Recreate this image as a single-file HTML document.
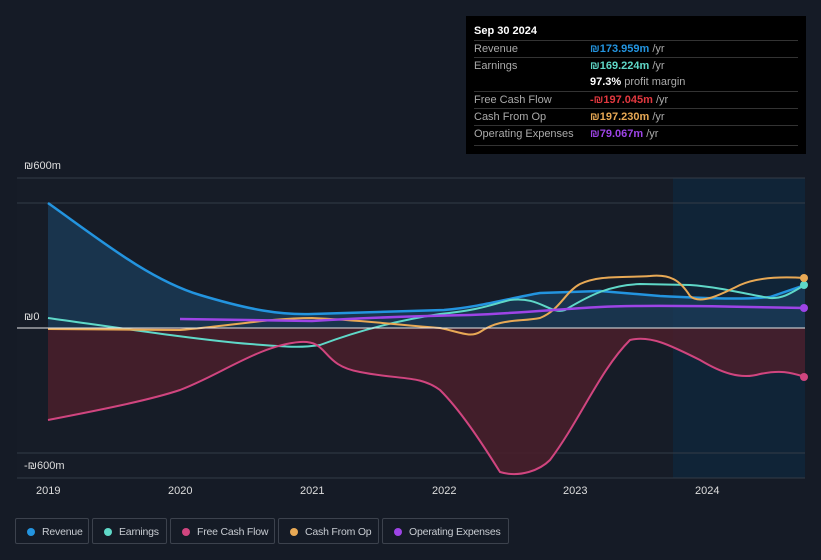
<!DOCTYPE html>
<html><head><style>
html,body{margin:0;background:#151b26;width:821px;height:560px;overflow:hidden}
body{font-family:"Liberation Sans",sans-serif;position:relative}
.tip{position:absolute;left:466px;top:16px;width:340px;height:138px;background:#000;color:#fff;font-size:11px}
.tip .h{position:absolute;left:8px;top:9px;font-weight:bold}
.row{position:absolute;left:8px;width:324px;height:17px;border-top:1px solid #333;line-height:17px}
.row .l{color:#aaa;position:absolute;left:0}
.row .v{position:absolute;left:116px;font-weight:bold}
.row .v span{color:#aaa;font-weight:normal}
.leg{position:absolute;top:518px;height:26px;border:1px solid #3c424d;border-radius:2px;color:#c8ccd2;font-size:10.5px;line-height:26px;box-sizing:border-box;white-space:nowrap}
.leg i{position:absolute;left:11px;top:9px;width:8px;height:8px;border-radius:50%}
.leg b{font-weight:normal;position:absolute;left:26px;white-space:nowrap;letter-spacing:-0.2px}
.ax{position:absolute;color:#ddd;font-size:11px}
</style></head><body>
<svg width="821" height="560" style="position:absolute;left:0;top:0">
<rect x="673" y="178" width="132" height="300" fill="#102437"/>
<rect x="17" y="178" width="656" height="300" fill="#161c27"/>
<line x1="17" y1="178" x2="805" y2="178" stroke="#333b47"/>
<line x1="17" y1="203" x2="805" y2="203" stroke="#333b47"/>
<line x1="17" y1="453" x2="805" y2="453" stroke="#333b47"/>
<line x1="17" y1="478" x2="805" y2="478" stroke="#333b47"/>
<path d="M48,203 C100,240 150,280 200,295 C250,310 280,315 312,314 L444,310 C480,307 510,298 540,293 L600,291 L660,296 C700,298 740,300 770,297 L805,285 L805,328 L48,328Z" fill="#1a3b57" opacity="0.8"/>
<path d="M48,420 C100,410 150,400 180,390 C220,375 260,345 300,342 C330,340 320,365 360,372 C400,380 420,375 440,390 C460,410 480,440 500,472 C520,478 540,470 550,460 C580,420 600,370 630,340 C650,335 670,345 700,360 C720,372 740,380 760,374 C780,370 790,372 805,377 L805,328 L48,328Z" fill="#4a1f2b" opacity="0.85"/>
<path d="M48,203 C100,240 150,280 200,295 C250,310 280,315 312,314 L444,310 C480,307 510,298 540,293 L600,291 L660,296 C700,298 740,300 770,297 L805,285" fill="none" stroke="#2394df" stroke-width="2.5"/>
<path d="M48,318 C120,328 200,340 250,344 C290,347 300,348 320,345 C360,330 400,320 440,314 C480,310 490,305 510,300 C540,296 550,315 565,310 C590,295 610,285 640,284 L690,285 C720,287 750,295 770,298 C785,299 795,290 805,285" fill="none" stroke="#5fd8c8" stroke-width="2"/>
<path d="M48,420 C100,410 150,400 180,390 C220,375 260,345 300,342 C330,340 320,365 360,372 C400,380 420,375 440,390 C460,410 480,440 500,472 C520,478 540,470 550,460 C580,420 600,370 630,340 C650,335 670,345 700,360 C720,372 740,380 760,374 C780,370 790,372 805,377" fill="none" stroke="#d0457f" stroke-width="2"/>
<path d="M48,329 L180,330 C230,326 270,318 312,318 C360,320 400,325 440,328 C460,332 470,338 480,332 C500,318 520,322 540,318 C560,310 565,292 580,284 C600,275 620,278 650,276 C670,274 680,280 690,296 C700,305 720,295 740,285 C760,276 790,277 805,278" fill="none" stroke="#e8a955" stroke-width="2"/>
<path d="M180,319 L312,321 C360,318 420,316 470,315 C520,313 560,309 600,307 C640,305 700,306 750,307 L805,308" fill="none" stroke="#9d44e6" stroke-width="2.5"/>
<line x1="17" y1="328" x2="805" y2="328" stroke="#e8e8e8" stroke-width="1"/>
<circle cx="804" cy="285" r="4" fill="#5fd8c8"/>
<circle cx="804" cy="278" r="4" fill="#e8a955"/>
<circle cx="804" cy="308" r="4" fill="#9d44e6"/>
<circle cx="804" cy="377" r="4" fill="#d0457f"/>
</svg>
<div class="ax" style="left:24px;top:160px">₪600m</div>
<div class="ax" style="left:24px;top:311px">₪0</div>
<div class="ax" style="left:24px;top:460px">-₪600m</div>
<div class="ax" style="left:36px;top:485px">2019</div>
<div class="ax" style="left:168px;top:485px">2020</div>
<div class="ax" style="left:300px;top:485px">2021</div>
<div class="ax" style="left:432px;top:485px">2022</div>
<div class="ax" style="left:563px;top:485px">2023</div>
<div class="ax" style="left:695px;top:485px">2024</div>
<div class="tip">
<div class="h">Sep 30 2024</div>
<div class="row" style="top:24px"><span class="l">Revenue</span><span class="v" style="color:#2394df">₪173.959m <span>/yr</span></span></div>
<div class="row" style="top:41px"><span class="l">Earnings</span><span class="v" style="color:#5fd8c8">₪169.224m <span>/yr</span></span></div>
<div class="row" style="top:58px;border-top:none"><span class="v" style="color:#fff">97.3% <span>profit margin</span></span></div>
<div class="row" style="top:75px"><span class="l">Free Cash Flow</span><span class="v" style="color:#e2383f">-₪197.045m <span>/yr</span></span></div>
<div class="row" style="top:92px"><span class="l">Cash From Op</span><span class="v" style="color:#e8a955">₪197.230m <span>/yr</span></span></div>
<div class="row" style="top:109px"><span class="l">Operating Expenses</span><span class="v" style="color:#9d44e6">₪79.067m <span>/yr</span></span></div>
<div class="row" style="top:129px;height:0"></div>
</div>
<div class="leg" style="left:15px;width:74px"><i style="background:#2394df"></i><b>Revenue</b></div>
<div class="leg" style="left:92px;width:75px"><i style="background:#5fd8c8"></i><b>Earnings</b></div>
<div class="leg" style="left:170px;width:105px"><i style="background:#d0457f"></i><b>Free Cash Flow</b></div>
<div class="leg" style="left:278px;width:101px"><i style="background:#e8a955"></i><b>Cash From Op</b></div>
<div class="leg" style="left:382px;width:127px"><i style="background:#9d44e6"></i><b>Operating Expenses</b></div>
</body></html>
